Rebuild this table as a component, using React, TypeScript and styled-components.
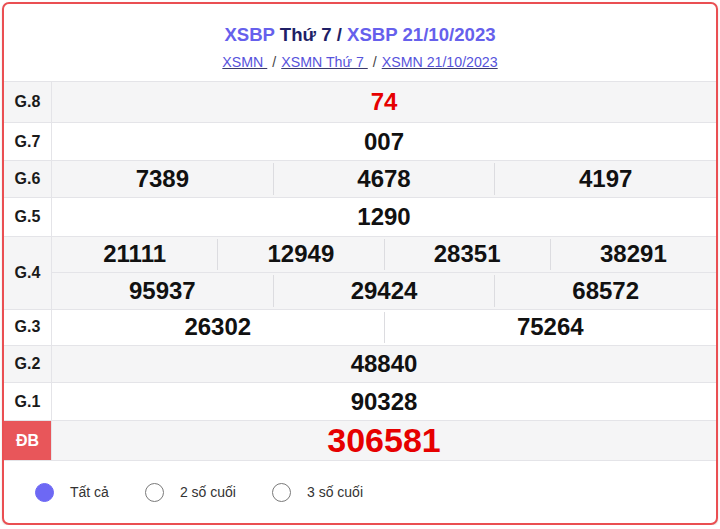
import React from "react";
import styled, { createGlobalStyle } from "styled-components";

const GlobalStyle = createGlobalStyle`
  html, body { margin: 0; padding: 0; background: #ffffff; }
  body { font-family: "Liberation Sans", Arial, Helvetica, sans-serif; }
  * { box-sizing: border-box; }
`;

const Card = styled.div`
  margin: 2px 2px 0 2px;
  border: 2px solid #ea4f52;
  border-radius: 7px;
  background: #fff;
  overflow: hidden;
  box-shadow: 0 1px 2px rgba(120, 110, 90, 0.25);
`;

const Header = styled.div`
  padding: 19px 0 9px;
  text-align: center;
`;

const Title = styled.h2`
  margin: 0;
  font-size: 18.6px;
  line-height: 24px;
  font-weight: 700;
  color: #1f1f66;
`;

const TitleLink = styled.a`
  color: #6660ec;
  text-decoration: none;
`;

const Breadcrumb = styled.div`
  margin-top: 5px;
  font-size: 14.2px;
  line-height: 20px;
  color: #444;
`;

const Crumb = styled.a`
  color: #5753dc;
  text-decoration: underline;
  text-decoration-color: #3a3a6a;
`;

const Sep = styled.span`
  margin: 0 5px;
  color: #444;
`;

const Table = styled.div`
  border-top: 1px solid #e4e4e8;
  border-bottom: 1px solid #e4e4e8;
`;

const Row = styled.div<{ $shade: boolean; $h: number }>`
  display: flex;
  min-height: ${(p) => p.$h}px;
  background: ${(p) => (p.$shade ? "#f5f5f6" : "#ffffff")};
  & + & { border-top: 1px solid #e4e4e8; }
`;

const Label = styled.div<{ $special?: boolean }>`
  flex: 0 0 48px;
  display: flex;
  align-items: center;
  justify-content: center;
  font-size: 16px;
  font-weight: 700;
  color: ${(p) => (p.$special ? "#ffffff" : "#1a1a1a")};
  background: ${(p) => (p.$special ? "#e8565a" : "transparent")};
  border-right: 1px solid #e4e4e8;
`;

const Values = styled.div`
  flex: 1;
  display: flex;
  flex-direction: column;
`;

const SubRow = styled.div`
  flex: 1;
  display: flex;
  & + & { border-top: 1px solid #e4e4e8; }
`;

const Num = styled.div<{ $red?: boolean; $big?: boolean }>`
  flex: 1;
  display: flex;
  align-items: center;
  justify-content: center;
  font-weight: 700;
  font-size: ${(p) => (p.$big ? 34 : 24)}px;
  color: ${(p) => (p.$red ? "#e60000" : "#111")};
  & + & { border-left: 1px solid #dcdce0; margin: 2px 0; }
`;

const Options = styled.div`
  display: flex;
  align-items: center;
  height: 62px;
  padding-left: 31px;
  gap: 36px;
`;

const Option = styled.label`
  display: flex;
  align-items: center;
  gap: 16px;
  font-size: 14px;
  color: #333;
  cursor: pointer;
`;

const Dot = styled.span<{ $on?: boolean }>`
  width: 19px;
  height: 19px;
  border-radius: 50%;
  background: ${(p) => (p.$on ? "#6d68f4" : "#fff")};
  border: 1px solid ${(p) => (p.$on ? "#6d68f4" : "#7a7a7a")};
`;

type Prize = { label: string; rows: string[][]; red?: boolean; big?: boolean; h: number; special?: boolean };

const prizes: Prize[] = [
  { label: "G.8", rows: [["74"]], red: true, h: 40 },
  { label: "G.7", rows: [["007"]], h: 38 },
  { label: "G.6", rows: [["7389", "4678", "4197"]], h: 37 },
  { label: "G.5", rows: [["1290"]], h: 38.5 },
  { label: "G.4", rows: [["21111", "12949", "28351", "38291"], ["95937", "29424", "68572"]], h: 73 },
  { label: "G.3", rows: [["26302", "75264"]], h: 36.5 },
  { label: "G.2", rows: [["48840"]], h: 37 },
  { label: "G.1", rows: [["90328"]], h: 38 },
  { label: "ĐB", rows: [["306581"]], red: true, big: true, h: 39.5, special: true },
];

export default function App() {
  return (
    <>
      <GlobalStyle />
      <Card>
        <Header>
          <Title>
            <TitleLink href="#">XSBP</TitleLink> Thứ 7 / <TitleLink href="#">XSBP 21/10/2023</TitleLink>
          </Title>
          <Breadcrumb>
            <Crumb href="#">XSMN </Crumb>
            <Sep>/</Sep>
            <Crumb href="#">XSMN Thứ 7 </Crumb>
            <Sep>/</Sep>
            <Crumb href="#">XSMN 21/10/2023</Crumb>
          </Breadcrumb>
        </Header>
        <Table>
          {prizes.map((p, i) => (
            <Row key={p.label} $shade={i % 2 === 0} $h={p.h}>
              <Label $special={p.special}>{p.label}</Label>
              <Values>
                {p.rows.map((r, j) => (
                  <SubRow key={j}>
                    {r.map((n) => (
                      <Num key={n} $red={p.red} $big={p.big}>
                        {n}
                      </Num>
                    ))}
                  </SubRow>
                ))}
              </Values>
            </Row>
          ))}
        </Table>
        <Options>
          <Option>
            <Dot $on />
            Tất cả
          </Option>
          <Option>
            <Dot />2 số cuối
          </Option>
          <Option>
            <Dot />3 số cuối
          </Option>
        </Options>
      </Card>
    </>
  );
}
